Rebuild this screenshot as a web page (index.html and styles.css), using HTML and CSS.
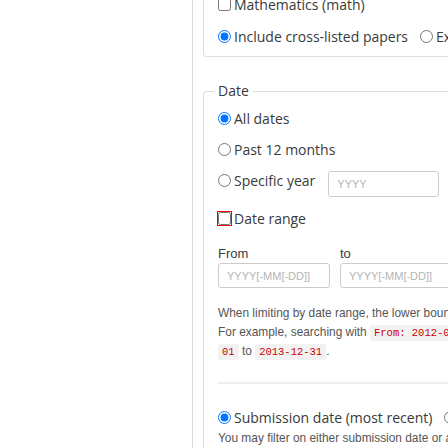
FILE: index.html
```html
<!DOCTYPE html>
<html>
<head>
<meta charset="utf-8">
<link rel="stylesheet" href="styles.css">
</head>
<body>
<div class="page">
  <div class="gutter"></div>
  <div class="main">
    <fieldset class="box box-top">
      <div class="row"><input type="checkbox" class="ctl"><span>Mathematics (math)</span></div>
      <div class="row row-cross">
        <input type="radio" name="cross" class="ctl" checked><span>Include cross-listed papers</span>
        <input type="radio" name="cross" class="ctl gap"><span>Exclude cross-listed papers</span>
      </div>
    </fieldset>
    <fieldset class="box box-date">
      <legend>Date</legend>
      <div class="row row-first"><input type="radio" name="date" class="ctl" checked><span>All dates</span></div>
      <div class="row"><input type="radio" name="date" class="ctl"><span>Past 12 months</span></div>
      <div class="row"><input type="radio" name="date" class="ctl"><span>Specific year</span><input type="text" class="field year" placeholder="YYYY"></div>
      <div class="row row-range"><input type="checkbox" class="ctl flagged"><span>Date range</span></div>
      <div class="range">
        <div class="col">
          <div class="lbl">From</div>
          <input type="text" class="field wide" placeholder="YYYY[-MM[-DD]]">
        </div>
        <div class="col">
          <div class="lbl">to</div>
          <input type="text" class="field wide" placeholder="YYYY[-MM[-DD]]">
        </div>
      </div>
      <p class="help">When limiting by date range, the lower bound of the "from" date and the upper bound of the "to" date are used.<br>For example, searching with <code>From: 2012-02</code> and <code>To: 2013</code> will search for papers submitted from <code>2012-02-</code><br><code>01</code> to <code>2013-12-31</code>.</p>
      <hr class="divider">
      <div class="row row-sub">
        <input type="radio" name="sub" class="ctl" checked><span>Submission date (most recent)</span>
        <input type="radio" name="sub" class="ctl gap"><span>Submission date (original)</span>
      </div>
      <p class="help help-sub">You may filter on either submission date or announcement date.</p>
    </fieldset>
  </div>
</div>
</body>
</html>
```
FILE: styles.css
```css
html, body {
  margin: 0;
  padding: 0;
  background: #fff;
  overflow: hidden;
  width: 448px;
  height: 448px;
}
.page {
  display: flex;
  font-family: "Open Sans", sans-serif;
  font-size: 14px;
  color: #3a3a3a;
}
.gutter {
  width: 192px;
  flex: none;
}
.main {
  flex: none;
  width: 520px;
  border-left: 1px solid #ddd;
  padding-left: 10px;
  min-height: 600px;
}
.box {
  border: 1px solid #ddd;
  border-radius: 4px;
  margin: 0;
  padding: 0 14px;
  min-width: 0;
}
.box-top {
  margin-top: -17px;
  padding-top: 11px;
  padding-bottom: 10px;
  border-top: none;
}
.box-date {
  margin-top: 24px;
  padding-top: 0;
  padding-bottom: 20px;
  border-bottom: none;
}
legend {
  padding: 0 4px;
  margin-left: -4px;
  font-size: 14px;
  line-height: 20px;
}
.row {
  display: flex;
  align-items: center;
  white-space: nowrap;
  height: 20px;
}
.row-first {
  margin-top: 7px;
}
.row + .row {
  margin-top: 11px;
}
.box .row-cross.row {
  margin-top: 12px;
}
.box .row-range.row {
  margin-top: 18px;
}
.ctl {
  margin: 0 3px 0 0;
  width: 13px;
  height: 13px;
  flex: none;
}
.gap {
  margin-left: 12px;
}
.flagged {
  outline: 1px solid #e00;
  outline-offset: 0;
}
.field {
  box-sizing: border-box;
  height: 26px;
  border: 1px solid #ccc;
  border-radius: 3px;
  font-family: "Liberation Sans", Arial, sans-serif;
  font-size: 11px;
  padding: 0 8px;
  color: #333;
  background: #fff;
}
.field::placeholder {
  color: #b5b5b5;
}
.year {
  margin-left: 13px;
  width: 111px;
  margin-top: 8px;
}
.range {
  display: flex;
  gap: 10px;
  margin-top: 18px;
}
.col {
  display: flex;
  flex-direction: column;
}
.lbl {
  font-family: "Liberation Sans", Arial, sans-serif;
  font-size: 13px;
  line-height: 15px;
  margin-bottom: 2px;
}
.wide {
  width: 112px;
  height: 25px;
}
.help {
  font-family: "Liberation Sans", Arial, sans-serif;
  font-size: 11.9px;
  line-height: 18.5px;
  color: #555;
  margin: 16px 0 0;
  white-space: nowrap;
}
code {
  font-family: "Liberation Mono", "Courier New", monospace;
  font-size: 10.5px;
  color: #c00;
  background: #f2f2f2;
  padding: 2px 4px;
  border-radius: 2px;
}
.divider {
  border: none;
  border-top: 2px solid #eee;
  margin: 20px 0 0;
}
.box .row-sub.row {
  margin-top: 23px;
  height: 22px;
}
.help-sub {
  margin-top: 0;
}
```
